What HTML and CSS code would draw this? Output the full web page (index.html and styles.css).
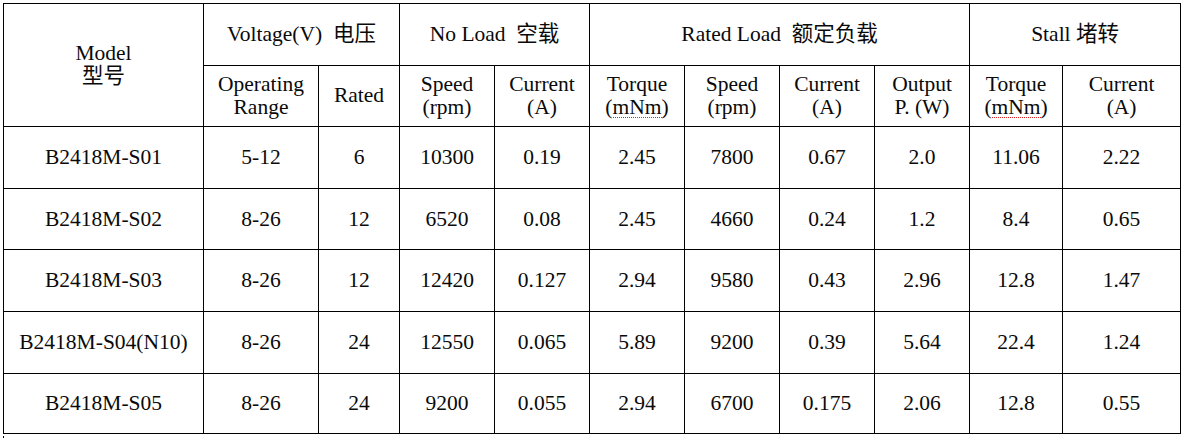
FILE: index.html
```html
<!DOCTYPE html>
<html>
<head>
<meta charset="utf-8">
<link rel="stylesheet" href="styles.css">
</head>
<body>
<div class="page">
<table class="spec">
  <colgroup>
    <col class="c-model">
    <col class="c-range">
    <col class="c-rated">
    <col class="c-std">
    <col class="c-std">
    <col class="c-std">
    <col class="c-std">
    <col class="c-std">
    <col class="c-std">
    <col class="c-stq">
    <col class="c-stc">
  </colgroup>
  <thead>
    <tr class="h1">
      <th rowspan="2">Model<br>型号</th>
      <th colspan="2">Voltage(V)&nbsp; 电压</th>
      <th colspan="2">No Load&nbsp; 空载</th>
      <th colspan="4">Rated Load&nbsp; 额定负载</th>
      <th colspan="2">Stall 堵转</th>
    </tr>
    <tr class="h2">
      <th>Operating<br>Range</th>
      <th>Rated</th>
      <th>Speed<br>(rpm)</th>
      <th>Current<br>(A)</th>
      <th>Torque<br>(<span class="spell">mNm</span>)</th>
      <th>Speed<br>(rpm)</th>
      <th>Current<br>(A)</th>
      <th>Output<br>P. (W)</th>
      <th>Torque<br>(<span class="spell">mNm</span>)</th>
      <th>Current<br>(A)</th>
    </tr>
  </thead>
  <tbody>
    <tr class="r1"><td>B2418M-S01</td><td>5-12</td><td>6</td><td>10300</td><td>0.19</td><td>2.45</td><td>7800</td><td>0.67</td><td>2.0</td><td>11.06</td><td>2.22</td></tr>
    <tr class="r2"><td>B2418M-S02</td><td>8-26</td><td>12</td><td>6520</td><td>0.08</td><td>2.45</td><td>4660</td><td>0.24</td><td>1.2</td><td>8.4</td><td>0.65</td></tr>
    <tr class="r3"><td>B2418M-S03</td><td>8-26</td><td>12</td><td>12420</td><td>0.127</td><td>2.94</td><td>9580</td><td>0.43</td><td>2.96</td><td>12.8</td><td>1.47</td></tr>
    <tr class="r4"><td>B2418M-S04(N10)</td><td>8-26</td><td>24</td><td>12550</td><td>0.065</td><td>5.89</td><td>9200</td><td>0.39</td><td>5.64</td><td>22.4</td><td>1.24</td></tr>
    <tr class="r5"><td>B2418M-S05</td><td>8-26</td><td>24</td><td>9200</td><td>0.055</td><td>2.94</td><td>6700</td><td>0.175</td><td>2.06</td><td>12.8</td><td>0.55</td></tr>
  </tbody>
</table>
<div class="tick"></div>
</div>
</body>
</html>
```

FILE: styles.css
```css
html, body {
  margin: 0;
  padding: 0;
  background: #fff;
}
.page {
  padding: 3px 0 0 3px;
}
.spec {
  border-collapse: collapse;
  table-layout: fixed;
  width: 1178px;
  font-family: "Liberation Serif", "Times New Roman", "Noto Sans CJK SC", serif;
  font-size: 21.5px;
  line-height: 23px;
  color: #0a0a0a;
}
.c-model { width: 200px; }
.c-range { width: 115px; }
.c-rated { width: 81px; }
.c-std { width: 95px; }
.c-stq { width: 93px; }
.c-stc { width: 118px; }
.spec th, .spec td {
  border: 1px solid #000;
  text-align: center;
  vertical-align: middle;
  font-weight: normal;
  padding: 0 2px;
  white-space: nowrap;
}
.spec th {
  padding-bottom: 1px;
}
.h1 { height: 62px; }
.h2 { height: 61px; }
.r1 { height: 62px; }
.r2 { height: 61px; }
.r3 { height: 62px; }
.r4 { height: 62px; }
.r5 { height: 60px; }
.spell {
  display: inline-block;
  line-height: 20px;
  border-bottom: 1px dotted #e02020;
}
.tick {
  width: 1px;
  height: 4px;
  background: #000;
  margin-top: 2px;
}
```
